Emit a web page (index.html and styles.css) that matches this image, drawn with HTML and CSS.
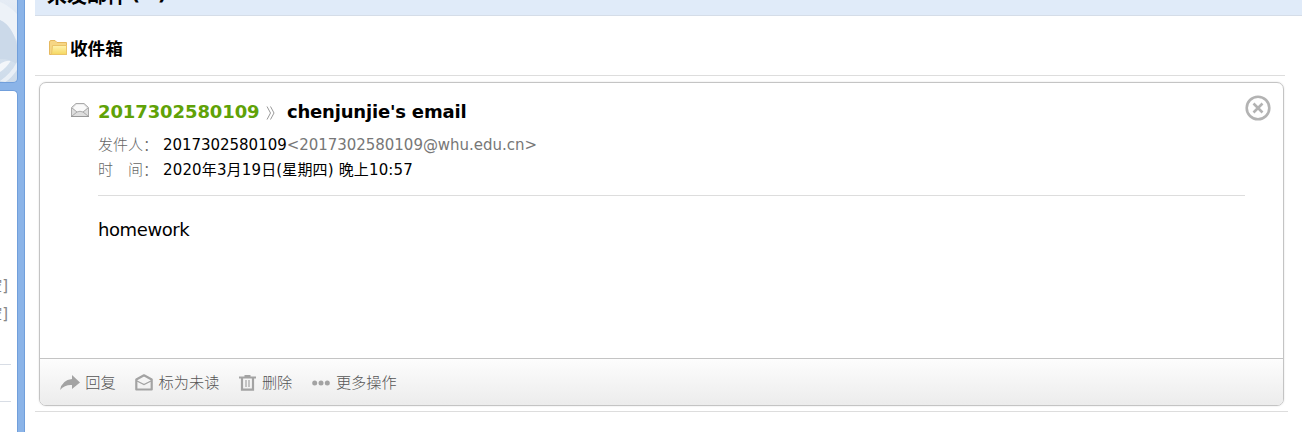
FILE: index.html
```html
<!DOCTYPE html>
<html lang="zh-CN">
<head>
<meta charset="utf-8">
<title>收件箱</title>
<link rel="stylesheet" href="styles.css">
</head>
<body>
<aside class="side">
  <div class="side-logo">
    <svg width="18" height="82" viewBox="0 0 17 82" preserveAspectRatio="none">
      <defs><linearGradient id="lg" x1="0" y1="0" x2="0" y2="1"><stop offset="0" stop-color="#e5ecf5"/><stop offset="1" stop-color="#cddbea"/></linearGradient></defs>
      <rect width="17" height="82" fill="url(#lg)"/>
      <path d="M0 20Q10 27 17 43V15Q8 5 0 2z" fill="#edf2f8"/>
      <path d="M0 20Q13 26 17 50V65Q8 58 0 59z" fill="#cbd9e9"/>
      <path d="M0 64Q6 60 10 61Q6 68 0 72z" fill="#f3f6fa"/>
      <path d="M0 81Q11 73 17 60V68Q12 77 5 82z" fill="#e9eff6"/>
    </svg>
  </div>
  <div class="side-list">
    <div class="side-link">空]</div>
    <div class="side-link">空]</div>
    <div class="side-rule first"></div>
    <div class="side-rule"></div>
  </div>
</aside>
<main class="main">
  <div class="group-head"><span>未发邮件</span><span class="count">(10)</span></div>
  <div class="folder">
    <svg width="18" height="16" viewBox="0 0 18 16">
      <defs><linearGradient id="fg" x1="0" y1="0" x2="0" y2="1"><stop offset="0" stop-color="#fff3b0"/><stop offset="1" stop-color="#f5d75f"/></linearGradient></defs>
      <path d="M.5 14.5V2Q.5.5 2 .5H6L8 2.500H17.500V14.500z" fill="#f6d685" stroke="#e6b95f"/>
      <path d="M2.500 14.500L3.500 5.500H17.500V14.500z" fill="url(#fg)" stroke="#ebc468"/>
    </svg>
    <span>收件箱</span>
  </div>
  <article class="card">
    <div class="card-body">
      <svg class="mail" width="20" height="18" viewBox="0 0 20 18">
        <path d="M1.500 15.500V6.500L6 2.500H14L18.500 6.500V15.500z" fill="#dedede" stroke="#aaa"/>
        <path d="M3 7L6.500 3.500H13.500L17 7L13 11H7z" fill="#fafafa"/>
        <path d="M2 7L7 11M18 7L13 11M2 15L7 11Q10 9.500 13 11L18 15" fill="none" stroke="#aaa"/>
        <path d="M1 15.500H19" stroke="#999"/>
      </svg>
      <div class="content">
        <h1 class="title"><span class="sender">2017302580109</span><svg class="sep" width="10" height="14" viewBox="0 0 10 14"><path d="M1 .5L4.500 7L1 13.500M4.500 .5L8 7L4.500 13.500" fill="none" stroke="#999"/></svg><span class="subject">chenjunjie's email</span></h1>
        <div class="meta"><span class="label">发件人：</span><span class="addr">2017302580109<i>&lt;2017302580109@whu.edu.cn&gt;</i></span></div>
        <div class="meta"><span class="label">时　间：</span><span class="date">2020年3月19日(星期四) 晚上10:57</span></div>
        <p class="text">homework</p>
      </div>
      <svg class="close" width="26" height="26" viewBox="0 0 26 26"><circle cx="13" cy="13" r="11.300" fill="none" stroke="#b3b3b3" stroke-width="2.600"/><path d="M8.500 8.500L17.500 17.500M17.500 8.500L8.500 17.500" stroke="#b3b3b3" stroke-width="2.600"/></svg>
    </div>
    <footer class="actions">
      <a class="act reply"><svg width="20" height="16" viewBox="0 0 20 16"><path d="M0 15Q2 5 12 4V0L20 7.500L12 14V10Q5 9.500 0 15z" fill="#a3a3a3"/></svg><span>回复</span></a>
      <a class="act unread"><svg width="18" height="17" viewBox="0 0 18 17"><path d="M1.300 15.500V5.500L9 1.300L16.700 5.500V15.500z" fill="none" stroke="#a3a3a3" stroke-width="2.200" stroke-linejoin="round"/><path d="M2 7L9 10.500L16 7" fill="none" stroke="#a3a3a3" stroke-width="1.300"/></svg><span>标为未读</span></a>
      <a class="act del"><svg width="17" height="16" viewBox="0 0 17 16"><path d="M0 2.500H17M5.500 1H11.500" stroke="#a3a3a3" stroke-width="2"/><path d="M3 3V14.700H14V3" fill="none" stroke="#a3a3a3" stroke-width="2.200"/><path d="M7 5V12M10 5V12" stroke="#a3a3a3" stroke-width="1.200"/></svg><span>删除</span></a>
      <a class="act more"><svg width="18" height="6" viewBox="0 0 18 6"><g fill="#a3a3a3"><circle cx="2.700" cy="3" r="2.500"/><circle cx="9" cy="3" r="2.500"/><circle cx="15.300" cy="3" r="2.500"/></g></svg><span>更多操作</span></a>
    </footer>
  </article>
  <div class="end-rule"></div>
</main>
</body>
</html>
```

FILE: styles.css
```css
* { box-sizing: border-box; }
body {
  margin: 0; width: 1302px; height: 432px; overflow: hidden; display: flex;
  background: #fff; color: #000;
  font-family: "DejaVu Sans", "Noto Sans CJK SC", sans-serif; font-size: 15px;
}
svg { display: block; flex: none; }
.side {
  width: 25px; height: 432px; padding-right: 6px; background: #8bb4e8;
  border-right: 1px solid #719fdb; display: flex; flex-direction: column; gap: 7px; flex: none;
}
.side-logo { height: 83px; border-right: 1px solid #719fdb; border-bottom: 1px solid #719fdb; border-radius: 0 0 5px 0; overflow: hidden; }
.side-list { flex: 1; background: #fff; border-top: 1px solid #719fdb; border-right: 1px solid #719fdb; border-radius: 0 5px 0 0; padding-top: 181px; overflow: hidden; }
.side-link { height: 28px; line-height: 28px; width: 8px; display: flex; justify-content: flex-end; white-space: nowrap; color: #888; }
.side-rule { width: 11px; height: 1px; background: #d8dde5; margin-top: 36px; }
.main { flex: 1; padding-left: 10px; }
.group-head { height: 16px; background: #e0ebf9; border-bottom: 1px solid #d5dde8; overflow: hidden; display: flex; align-items: flex-end; padding: 0 0 7px 12px; font-weight: bold; font-size: 20px; line-height: 24px; }
.count { font-size: 20px; letter-spacing: -3.400px; margin: 0 0 3px 4px; }
.folder { width: 1250px; height: 60px; border-bottom: 1px solid #ddd; padding: 0 0 0 14px; display: flex; align-items: center; gap: 3px; font-weight: bold; font-size: 17.600px; }
.folder svg { margin-top: 4px; }
.folder span { position: relative; top: 2px; }
.card { width: 1245px; height: 324px; margin: 6px 0 0 4px; border: 1px solid #c4c4c4; border-radius: 7px; overflow: hidden; box-shadow: 0 0 2px #ddd; }
.card-body { height: 275px; display: flex; padding-left: 30px; }
.mail { margin-top: 18px; }
.content { width: 1147px; margin-left: 8px; }
.title { margin: 17px 0 0; height: 24px; display: flex; align-items: center; font-size: 18px; font-weight: bold; line-height: 24px; }
.sender { width: 161px; color: #5fa207; letter-spacing: -.1px; }
.sep { margin: 2px 0 0 7px; }
.subject { margin-left: 11px; white-space: nowrap; letter-spacing: -.19px; }
.meta { height: 25px; line-height: 25px; display: flex; white-space: nowrap; position: relative; top: 9px; }
.label { width: 65px; color: #666; font-family: "Noto Sans CJK SC", sans-serif; font-weight: 300; margin-top: -2px; }
.meta i { font-style: normal; color: #777; }
.addr { letter-spacing: -.03px; }
.date { letter-spacing: .15px; }
.text { margin: 21px 0 0; border-top: 1px solid #ddd; padding-top: 22px; font-size: 18px; line-height: 24px; letter-spacing: -.4px; }
.close { margin: 12px 0 0; }
.actions { height: 47px; border-top: 1px solid #c4c4c4; background: linear-gradient(#fdfdfd, #ececec); display: flex; align-items: center; padding-left: 20px; color: #555; font-weight: 300; font-size: 15.200px; }
.act { display: flex; align-items: center; gap: 5.300px; margin-right: 19.600px; white-space: nowrap; }
.act span { margin-top: -2px; }
.del { gap: 6px; }
.more { gap: 6px; }
.del svg, .unread svg, .reply svg { margin-top: 1px; }
.more svg { margin-top: 2px; }
.end-rule { width: 1253px; height: 1px; margin-top: 5px; background: #ddd; }
```
